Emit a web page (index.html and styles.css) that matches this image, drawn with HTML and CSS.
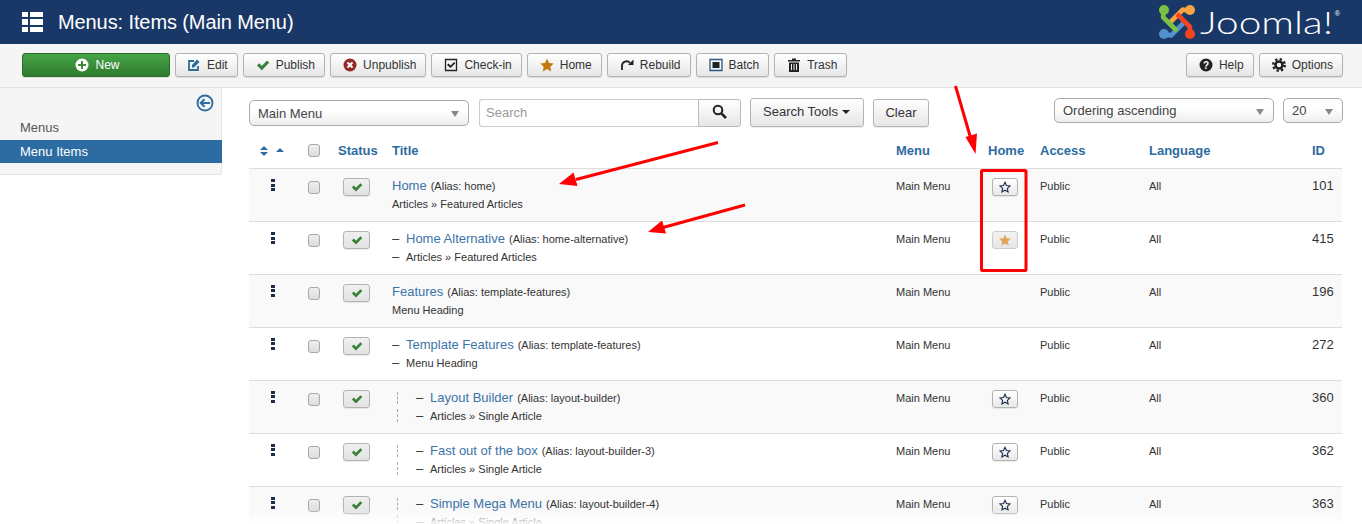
FILE: index.html
```html
<!DOCTYPE html>
<html lang="en">
<head>
<meta charset="utf-8">
<title>Menus: Items (Main Menu)</title>
<link rel="stylesheet" href="styles.css">
</head>
<body>
<svg class="defs" width="0" height="0">
  <symbol id="i-check" viewBox="0 0 14 14"><path d="M1 7.500l2.200-2.200 2.600 2.600L11 2.600l2.200 2.200-7.400 7.400z"/></symbol>
  <symbol id="i-star" viewBox="0 0 14 14"><path d="M7 .6l2 4.300 4.700.6-3.400 3.200.9 4.700L7 11.100l-4.200 2.300.9-4.700L.3 5.500 5 4.900z"/></symbol>
  <symbol id="i-star-o" viewBox="0 0 14 14"><path fill="none" stroke="#1f2d4d" stroke-width="1.300" d="M7 1.500l1.700 3.800 4.100.5-3 2.800.8 4.100L7 10.700l-3.600 2 .8-4.100-3-2.800 4.100-.5z"/></symbol>
</svg>
<header class="topbar">
  <svg class="grid-icon" width="21" height="21" viewBox="0 0 21 21"><path fill="#fff" d="M0 0h6v5H0zM8 0h13v5H8zM0 7h6v6H0zM8 7h13v6H8zM0 15h6v5H0zM8 15h13v5H8z"/></svg>
  <h1 class="page-title">Menus: Items (Main Menu)</h1>
  <div class="brand">
    <svg class="brand-mark" width="38" height="36" viewBox="0 0 38 36">
      <g fill="none" stroke-width="4.600" stroke-linejoin="round">
        <path stroke="#f9a541" d="M31 7l-6-1.500L12 18.500"/>
        <path stroke="#5091cd" d="M7 30l6 1.500L26 18.500"/>
        <path stroke="#7ac143" d="M6 7l-1 6 14 14"/>
        <path stroke="#f44321" d="M31 29l1-6L19 10"/>
      </g>
      <circle cx="6" cy="6" r="5" fill="#7ac143"/><circle cx="32" cy="6" r="5" fill="#f9a541"/>
      <circle cx="6" cy="30" r="5" fill="#5091cd"/><circle cx="32" cy="30" r="5" fill="#f44321"/>
    </svg>
    <span class="brand-name">Joomla!</span><sup class="brand-reg">®</sup>
  </div>
</header>
<nav class="toolbar">
  <a class="btn btn-new"><svg width="14" height="14" viewBox="0 0 14 14"><circle cx="7" cy="7" r="6.500" fill="#fff"/><path fill="#3d8b37" d="M6 3h2v3h3v2H8v3H6V8H3V6h3z"/></svg>New</a>
  <a class="btn btn-edit"><svg width="14" height="14" viewBox="0 0 14 14"><path fill="none" stroke="#2a6f97" stroke-width="1.800" d="M11 8v4H2V3h5"/><path fill="#2a6f97" d="M5 7l5-5.500 2.500 2.500L7 9.500H5z"/></svg>Edit</a>
  <a class="btn"><svg class="ic-green" width="14" height="14"><use href="#i-check"/></svg>Publish</a>
  <a class="btn"><svg width="14" height="14" viewBox="0 0 14 14"><circle cx="7" cy="7" r="6.500" fill="#942a25"/><path stroke="#fff" stroke-width="2" d="M4.500 4.500l5 5m0-5l-5 5"/></svg>Unpublish</a>
  <a class="btn"><svg width="14" height="14" viewBox="0 0 14 14"><path fill="none" stroke="#222" stroke-width="1.300" d="M1.500 1.500h11v11h-11z"/><path fill="#222" d="M3 7l1.500-1.500 2 2L10 4l1.300 1.300L6.500 10z"/></svg>Check-in</a>
  <a class="btn"><svg class="ic-amber" width="14" height="14"><use href="#i-star"/></svg>Home</a>
  <a class="btn"><svg width="14" height="14" viewBox="0 0 14 14"><path fill="none" stroke="#222" stroke-width="1.800" d="M2 12V8a4.500 4.500 0 0 1 8-3"/><path fill="#222" d="M13.500 1.500V7H8z"/></svg>Rebuild</a>
  <a class="btn"><svg width="14" height="14" viewBox="0 0 14 14"><path fill="none" stroke="#2a5a85" stroke-width="1.300" d="M1 1.500h12v11H1z"/><path fill="#222" d="M3.500 4h7v6h-7z"/></svg>Batch</a>
  <a class="btn"><svg width="14" height="14" viewBox="0 0 14 14"><path fill="#222" fill-rule="evenodd" d="M1 2h4V.5h4V2h4v1.500H1zM2 4.500h10V14H2zM4 6v6h1V6zm2.500 0v6h1V6zM9 6v6h1V6z"/></svg>Trash</a>
  <span class="toolbar-gap"></span>
  <a class="btn"><svg width="14" height="14" viewBox="0 0 14 14"><circle cx="7" cy="7" r="6.500" fill="#222"/><text class="q-mark" x="7" y="10.500" text-anchor="middle">?</text></svg>Help</a>
  <a class="btn"><svg width="14" height="14" viewBox="0 0 14 14"><circle cx="7" cy="7" r="5.800" fill="none" stroke="#222" stroke-width="2.400" stroke-dasharray="2.300 2.250"/><circle cx="7" cy="7" r="3.500" fill="none" stroke="#222" stroke-width="2.600"/></svg>Options</a>
</nav>
<div class="workspace">
  <aside class="sidebar">
    <div class="side-toggle"><svg width="18" height="18" viewBox="0 0 18 18"><circle cx="9" cy="9" r="7.500" fill="none" stroke="#2d6ca2" stroke-width="1.900"/><path fill="none" stroke="#2d6ca2" stroke-width="2" d="M14 9H5m3.500-3.800L4.700 9l3.800 3.800"/></svg></div>
    <a class="side-link">Menus</a>
    <a class="side-link active">Menu Items</a>
  </aside>
  <main class="content">
    <div class="filters">
      <div class="select select-menu">Main Menu<i class="caret"></i></div>
      <div class="search">
        <div class="search-input">Search</div>
        <a class="search-btn"><svg width="15" height="15" viewBox="0 0 15 15"><circle cx="6" cy="6" r="4.300" fill="none" stroke="#222" stroke-width="2"/><path stroke="#222" stroke-width="2.600" d="M9.300 9.300l4.700 4.700"/></svg></a>
      </div>
      <a class="fbtn fbtn-tools">Search Tools<i class="caret-dark"></i></a>
      <a class="fbtn fbtn-clear">Clear</a>
      <span class="toolbar-gap"></span>
      <div class="select select-order">Ordering ascending<i class="caret"></i></div>
      <div class="select select-limit">20<i class="caret"></i></div>
    </div>
    <table class="items">
      <colgroup>
        <col class="c-order"><col class="c-box"><col class="c-status"><col class="c-title"><col class="c-menu"><col class="c-home"><col class="c-access"><col class="c-lang"><col class="c-id">
      </colgroup>
      <thead>
        <tr>
          <th class="th-sort"><svg width="26" height="12" viewBox="0 0 26 12"><path fill="#2d6ca2" d="M4 1l4 4H0zM0 7h8l-4 4zM20 3l4 4h-8z"/></svg></th>
          <th class="td-box"><input class="cb" type="checkbox"></th>
          <th>Status</th><th>Title</th><th>Menu</th><th>Home</th><th>Access</th><th>Language</th><th>ID</th>
        </tr>
      </thead>
      <tbody>
        <tr>
          <td class="td-order"><i class="handle"></i></td><td class="td-box"><input class="cb" type="checkbox"></td>
          <td class="td-status"><a class="tick"><svg class="ic-green" width="12" height="12"><use href="#i-check"/></svg></a></td>
          <td class="td-title"><div class="t-line"><a class="t-link">Home</a><span class="t-alias">(Alias: home)</span></div><div class="t-sub">Articles » Featured Articles</div></td>
          <td>Main Menu</td>
          <td class="td-home"><a class="tick star-btn"><svg width="12" height="12"><use href="#i-star-o"/></svg></a></td>
          <td>Public</td><td>All</td><td class="td-id">101</td>
        </tr>
        <tr>
          <td class="td-order"><i class="handle"></i></td><td class="td-box"><input class="cb" type="checkbox"></td>
          <td class="td-status"><a class="tick"><svg class="ic-green" width="12" height="12"><use href="#i-check"/></svg></a></td>
          <td class="td-title"><div class="t-line"><span class="dash">–</span><a class="t-link">Home Alternative</a><span class="t-alias">(Alias: home-alternative)</span></div><div class="t-sub"><span class="dash">–</span>Articles » Featured Articles</div></td>
          <td>Main Menu</td>
          <td class="td-home"><a class="tick star-btn star-on"><svg class="ic-star-on" width="12" height="12"><use href="#i-star"/></svg></a></td>
          <td>Public</td><td>All</td><td class="td-id">415</td>
        </tr>
        <tr>
          <td class="td-order"><i class="handle"></i></td><td class="td-box"><input class="cb" type="checkbox"></td>
          <td class="td-status"><a class="tick"><svg class="ic-green" width="12" height="12"><use href="#i-check"/></svg></a></td>
          <td class="td-title"><div class="t-line"><a class="t-link">Features</a><span class="t-alias">(Alias: template-features)</span></div><div class="t-sub">Menu Heading</div></td>
          <td>Main Menu</td><td class="td-home"></td>
          <td>Public</td><td>All</td><td class="td-id">196</td>
        </tr>
        <tr>
          <td class="td-order"><i class="handle"></i></td><td class="td-box"><input class="cb" type="checkbox"></td>
          <td class="td-status"><a class="tick"><svg class="ic-green" width="12" height="12"><use href="#i-check"/></svg></a></td>
          <td class="td-title"><div class="t-line"><span class="dash">–</span><a class="t-link">Template Features</a><span class="t-alias">(Alias: template-features)</span></div><div class="t-sub"><span class="dash">–</span>Menu Heading</div></td>
          <td>Main Menu</td><td class="td-home"></td>
          <td>Public</td><td>All</td><td class="td-id">272</td>
        </tr>
        <tr>
          <td class="td-order"><i class="handle"></i></td><td class="td-box"><input class="cb" type="checkbox"></td>
          <td class="td-status"><a class="tick"><svg class="ic-green" width="12" height="12"><use href="#i-check"/></svg></a></td>
          <td class="td-title"><div class="t-line"><i class="gap"></i><span class="dash">–</span><a class="t-link">Layout Builder</a><span class="t-alias">(Alias: layout-builder)</span></div><div class="t-sub"><i class="gap"></i><span class="dash">–</span>Articles » Single Article</div></td>
          <td>Main Menu</td>
          <td class="td-home"><a class="tick star-btn"><svg width="12" height="12"><use href="#i-star-o"/></svg></a></td>
          <td>Public</td><td>All</td><td class="td-id">360</td>
        </tr>
        <tr>
          <td class="td-order"><i class="handle"></i></td><td class="td-box"><input class="cb" type="checkbox"></td>
          <td class="td-status"><a class="tick"><svg class="ic-green" width="12" height="12"><use href="#i-check"/></svg></a></td>
          <td class="td-title"><div class="t-line"><i class="gap"></i><span class="dash">–</span><a class="t-link">Fast out of the box</a><span class="t-alias">(Alias: layout-builder-3)</span></div><div class="t-sub"><i class="gap"></i><span class="dash">–</span>Articles » Single Article</div></td>
          <td>Main Menu</td>
          <td class="td-home"><a class="tick star-btn"><svg width="12" height="12"><use href="#i-star-o"/></svg></a></td>
          <td>Public</td><td>All</td><td class="td-id">362</td>
        </tr>
        <tr>
          <td class="td-order"><i class="handle"></i></td><td class="td-box"><input class="cb" type="checkbox"></td>
          <td class="td-status"><a class="tick"><svg class="ic-green" width="12" height="12"><use href="#i-check"/></svg></a></td>
          <td class="td-title"><div class="t-line"><i class="gap"></i><span class="dash">–</span><a class="t-link">Simple Mega Menu</a><span class="t-alias">(Alias: layout-builder-4)</span></div><div class="t-sub"><i class="gap"></i><span class="dash">–</span>Articles » Single Article</div></td>
          <td>Main Menu</td>
          <td class="td-home"><a class="tick star-btn"><svg width="12" height="12"><use href="#i-star-o"/></svg></a></td>
          <td>Public</td><td>All</td><td class="td-id">363</td>
        </tr>
      </tbody>
    </table>
  </main>
</div>
<div class="fade"></div>
<svg class="notes" width="1362" height="524" viewBox="0 0 1362 524">
  <g fill="none" stroke="#ff0000" stroke-width="3">
    <path d="M955.500 86l16 55"/>
    <path d="M718 142.500l-142 37"/>
    <path d="M745 205l-82 22.500"/>
    <rect x="981.500" y="170.500" width="44.500" height="100" rx="1"/>
  </g>
  <g fill="#ff0000">
    <path d="M975.500 154l-10-17 11.500-3.500z"/>
    <path d="M559 184l14.500-11.500 4 13.500z"/>
    <path d="M648 232l14-11.500 4 13z"/>
  </g>
</svg>
</body>
</html>
```

FILE: styles.css
```css
* { box-sizing: border-box; }
html, body { margin: 0; padding: 0; }
body {
  position: relative;
  height: 524px;
  overflow: hidden;
  background: #fff;
  color: #333;
  font-family: "Liberation Sans", Arial, sans-serif;
  font-size: 13px;
}
.defs { position: absolute; }
.ic-green { fill: #378137; }
.ic-amber { fill: #c27a0c; }
.ic-star-on { fill: #dda75c; }

.topbar {
  display: flex;
  align-items: center;
  height: 44px;
  padding-left: 22px;
  background: #1a3867;
}
.grid-icon { margin-right: 15px; }
.page-title {
  margin: 0;
  color: #fff;
  font-size: 20px;
  font-weight: 400;
  letter-spacing: -.1px;
}
.brand {
  display: flex;
  align-items: center;
  margin-left: auto;
  margin-right: 22px;
  color: #fff;
}
.brand-mark { margin-right: 4px; }
.brand-name {
  width: 100px;
  margin-right: 35px;
  font-family: Lato, "Liberation Sans", sans-serif;
  font-size: 31px;
  font-weight: 300;
  line-height: 44px;
  transform: scaleX(1.31);
  transform-origin: left center;
}
.brand-reg { align-self: flex-start; margin: 9px 0 0 0; font-size: 7px; line-height: 9px; }

.toolbar {
  display: flex;
  align-items: center;
  gap: 5px;
  height: 44px;
  padding: 0 19px 1px 22px;
  background: #f5f5f5;
  border-bottom: 1px solid #e3e3e3;
}
.toolbar-gap { margin-left: auto; }
.btn {
  display: inline-flex;
  align-items: center;
  gap: 6px;
  height: 24px;
  padding: 0 9px 0 12px;
  color: #333;
  font-size: 12px;
  background: linear-gradient(#fff, #e6e6e6);
  border: 1px solid #b3b3b3;
  border-radius: 3px;
  box-shadow: 0 1px 1px rgba(0,0,0,.1);
}
.btn-edit { padding-left: 11px; }
.btn-new {
  justify-content: center;
  width: 148px;
  color: #fff;
  background: linear-gradient(#46a546, #2f7a2f);
  border-color: #2b6a2b;
}
.q-mark { fill: #fff; font-size: 10px; font-weight: 700; }

.workspace { display: flex; align-items: flex-start; }
.sidebar {
  flex: 0 0 222px;
  height: 87px;
  padding-top: 6px;
  background: #f5f5f5;
  border-right: 1px solid #e3e3e3;
  border-bottom: 1px solid #e3e3e3;
  border-radius: 0 0 3px 0;
}
.side-toggle { display: flex; justify-content: flex-end; height: 22px; padding-right: 7px; }
.side-link {
  display: block;
  height: 23px;
  padding-left: 20px;
  color: #555;
  line-height: 23px;
}
.side-link.active { margin-top: 1px; margin-right: -1px; color: #fff; background: #2d6ca2; }

.content { flex: 1; padding: 10px 19px 0 27px; }
.filters { display: flex; align-items: flex-start; height: 34px; }
.select {
  position: relative;
  height: 26px;
  padding-left: 8px;
  color: #444;
  line-height: 26px;
  background: linear-gradient(#fff 40%, #eee);
  border: 1px solid #aaa;
  border-radius: 5px;
}
.caret {
  position: absolute;
  top: 10px;
  right: 9px;
  border: 4px solid transparent;
  border-top: 6px solid #888;
  border-bottom: 0;
}
.select-menu { width: 220px; margin-top: 2px; }
.select-order { width: 220px; height: 25px; line-height: 24px; }
.select-limit { width: 60px; height: 25px; margin-left: 9px; line-height: 24px; }
.search { display: flex; width: 262px; height: 28px; margin: 1px 0 0 10px; }
.search-input {
  flex: 1;
  padding-left: 6px;
  color: #999;
  line-height: 26px;
  background: #fff;
  border: 1px solid #ccc;
  border-right: 0;
  border-radius: 3px 0 0 3px;
}
.search-btn {
  display: flex;
  align-items: center;
  justify-content: center;
  width: 43px;
  padding-bottom: 3px;
  background: linear-gradient(#fff, #e6e6e6);
  border: 1px solid #bbb;
  border-radius: 0 3px 3px 0;
}
.fbtn {
  display: block;
  color: #333;
  background: linear-gradient(#fff, #e6e6e6);
  border: 1px solid #b3b3b3;
  border-radius: 3px;
  box-shadow: 0 1px 1px rgba(0,0,0,.08);
}
.fbtn-tools { width: 114px; height: 29px; margin-left: 9px; padding-left: 12px; line-height: 25px; }
.fbtn-clear { width: 56px; height: 28px; margin: 1px 0 0 9px; text-align: center; line-height: 26px; }
.caret-dark {
  display: inline-block;
  margin-left: 4px;
  vertical-align: 2px;
  border: 4px solid transparent;
  border-top: 4px solid #222;
  border-bottom: 0;
}

.items { width: 1093px; border-collapse: collapse; table-layout: fixed; font-size: 11px; }
.c-order { width: 47px; } .c-box { width: 34px; } .c-status { width: 54px; }
.c-title { width: 504px; } .c-menu { width: 92px; } .c-home { width: 52px; }
.c-access { width: 109px; } .c-lang { width: 163px; } .c-id { width: 38px; }
th {
  height: 36px;
  padding: 2px 0 0 8px;
  color: #2d6ca2;
  font-size: 13px;
  font-weight: 700;
  text-align: left;
}
.th-sort { padding-left: 11px; }
.th-sort svg { display: block; }
td {
  height: 53px;
  padding: 11px 0 0 8px;
  color: #333;
  line-height: 13px;
  vertical-align: top;
  border-top: 1px solid #ddd;
}
tbody tr:nth-child(odd) td { background: #f9f9f9; }
.td-box { padding-left: 12px; }
td.td-box { padding-top: 12px; }
.cb {
  display: block;
  width: 12px;
  height: 13px;
  margin: 0;
  appearance: none;
  background: linear-gradient(#eee, #ddd);
  border: 1px solid #a8a8a8;
  border-radius: 3px;
}
.td-order { padding: 10px 0 0 22px; }
.handle {
  display: block;
  width: 4px;
  height: 12px;
  background: repeating-linear-gradient(#1f2d4d 0 3px, transparent 3px 4.500px);
}
td.td-status { padding: 9px 0 0 13px; }
td.td-home { padding: 9px 0 0 12px; }
.tick {
  display: flex;
  align-items: center;
  justify-content: center;
  width: 27px;
  height: 18px;
  background: linear-gradient(#f0f0f0, #e2e2e2);
  border: 1px solid #b3b3b3;
  border-radius: 3px;
  box-shadow: 0 1px 1px rgba(0,0,0,.08);
}
.star-btn { width: 26px; background: linear-gradient(#fff, #e8e8e8); }
.star-on { background: linear-gradient(#f2f2f2, #e6e6e6); border-color: #ccc; box-shadow: none; }
td.td-title { padding-top: 9px; }
.t-line { display: flex; align-items: baseline; height: 17px; line-height: 16px; }
.t-sub { display: flex; height: 18px; line-height: 18px; }
.t-link { color: #3c74a8; font-size: 13px; }
.t-alias { margin-left: 4px; }
.dash { flex: 0 0 14px; font-size: 13px; }
.gap { flex: 0 0 24px; align-self: stretch; position: relative; }
.gap::before {
  content: "";
  position: absolute;
  top: 2px;
  bottom: 3px;
  left: 5px;
  border-left: 1px dashed #aaa;
}
td.td-id { font-size: 13px; line-height: 12px; }

.fade {
  position: absolute;
  right: 0;
  bottom: 0;
  left: 0;
  height: 15px;
  background: linear-gradient(rgba(255,255,255,0), rgba(255,255,255,.92));
}
.notes { position: absolute; top: 0; left: 0; pointer-events: none; }
```
